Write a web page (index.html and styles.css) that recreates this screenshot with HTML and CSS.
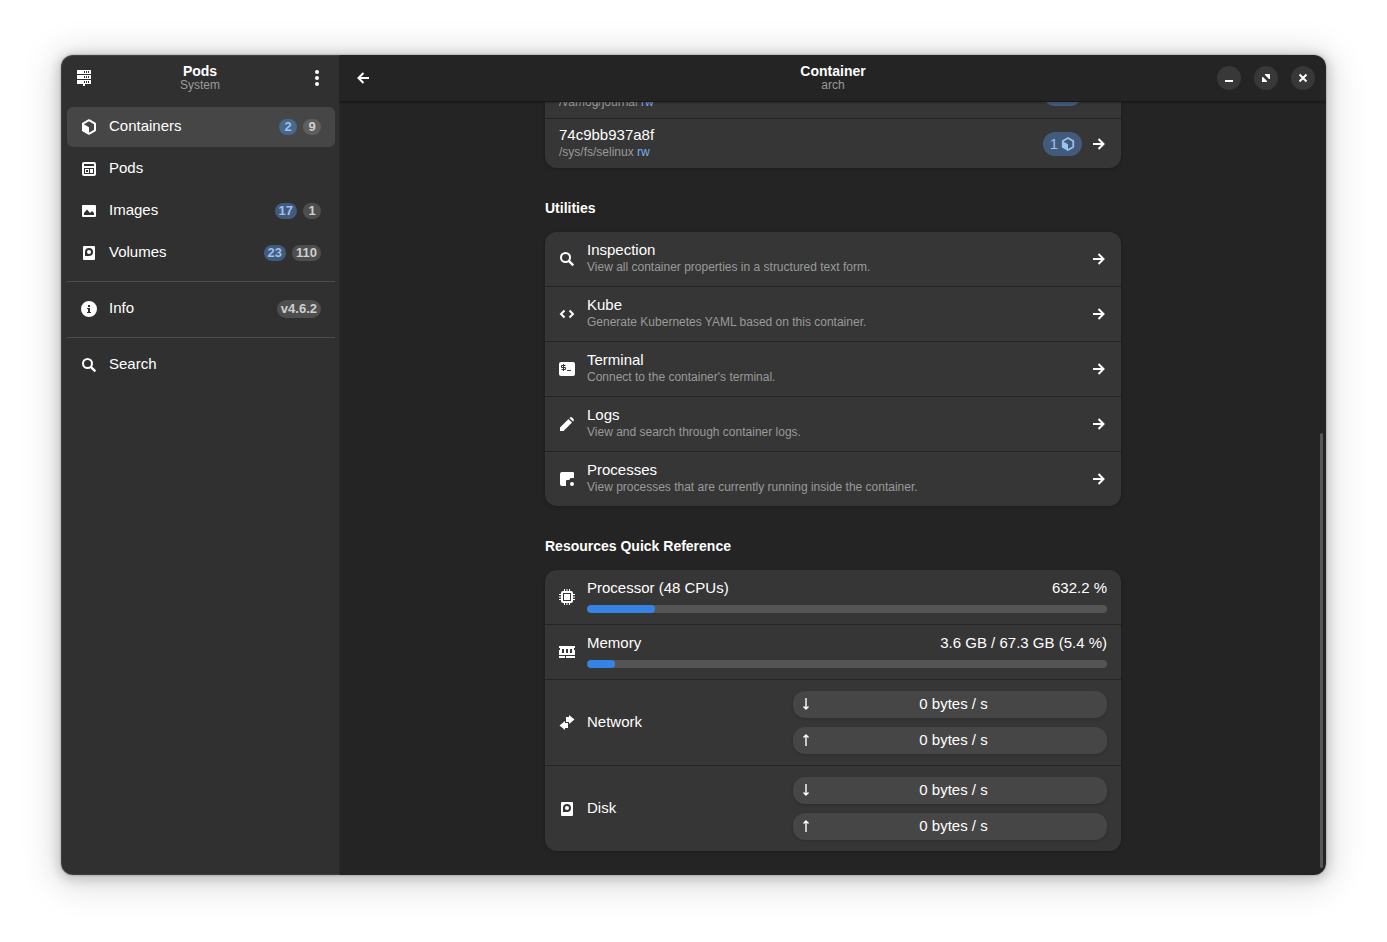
FILE: index.html
```html
<!DOCTYPE html>
<html lang="en">

<head>
    <meta charset="UTF-8">
    <meta name="viewport" content="width=device-width, initial-scale=1.0">
    <title>Pods</title>

    <link rel="stylesheet" href="styles.css">
</head>

<body>
    <!-- shared icons -->
    <svg class="icon-defs" aria-hidden="true">
        <symbol id="cube" viewBox="0 0 16 16">
            <path d="M8 1.2 14 4.6v6.8L8 14.8 2 11.4V4.6z" fill="none" stroke="currentColor" stroke-width="2" stroke-linejoin="round"/>
            <path d="M1.5 4.6 8 8.2v7L2 12z" fill="currentColor"/>
        </symbol>
        <symbol id="disk" viewBox="0 0 16 16">
            <path fill="currentColor" fill-rule="evenodd" d="M3 1h10a1 1 0 0 1 1 1v12a1 1 0 0 1-1 1H3a1 1 0 0 1-1-1V2a1 1 0 0 1 1-1zM8 3a4 4 0 0 0-4 4v4h4a4 4 0 0 0 0-8z"/>
            <circle cx="8" cy="7" r="2" fill="currentColor"/>
        </symbol>
        <symbol id="search" viewBox="0 0 16 16">
            <circle cx="6.5" cy="6.5" r="4.5" fill="none" stroke="currentColor" stroke-width="2"/>
            <path d="m9.8 9.8 4.5 4.5" stroke="currentColor" stroke-width="2.4"/>
        </symbol>
        <symbol id="go-next" viewBox="0 0 16 16">
            <path d="M2 8h10M7.500 3l5 5-5 5" fill="none" stroke="currentColor" stroke-width="2"/>
        </symbol>
        <symbol id="down" viewBox="0 0 8 16">
            <path d="M4 1v11M1.5 9.500 4 12l2.500-2.500" fill="none" stroke="currentColor" stroke-width="1.4"/>
        </symbol>
        <symbol id="up" viewBox="0 0 8 16">
            <path d="M4 13V2M1.5 4.500 4 2l2.500 2.500" fill="none" stroke="currentColor" stroke-width="1.4"/>
        </symbol>
    </svg>

    <div class="window">
        <aside class="sidebar">
            <header class="headerbar">
                <button class="flat-btn" aria-label="Connections">
                    <svg class="icon" viewBox="0 0 16 16">
                        <path fill="currentColor" fill-rule="evenodd" d="M1 0h14v4H1zM8 1v2h1V1zM10 1v2h1V1zM12 1v2h1V1zM1 5h14v4H1zM8 6v2h1V6zM10 6v2h1V6zM12 6v2h1V6zM1 10h14v4H9v2H7v-2H1zM8 11v2h1v-2zM10 11v2h1v-2zM12 11v2h1v-2z"/>
                    </svg>
                </button>
                <div class="titles">
                    <h1>Pods</h1>
                    <p>System</p>
                </div>
                <button class="flat-btn end" aria-label="Main menu">
                    <svg class="icon" viewBox="0 0 16 16" fill="currentColor">
                        <circle cx="8" cy="2" r="2"/><circle cx="8" cy="8" r="2"/><circle cx="8" cy="14" r="2"/>
                    </svg>
                </button>
            </header>

            <nav class="nav">
                <a href="#" class="nav-item active">
                    <svg class="icon"><use href="#cube"/></svg>
                    <span class="nav-label">Containers</span>
                    <span class="badge blue">2</span>
                    <span class="badge">9</span>
                </a>
                <a href="#" class="nav-item">
                    <svg class="icon" viewBox="0 0 16 16">
                        <path fill="currentColor" fill-rule="evenodd" d="M3 1h10a2 2 0 0 1 2 2v10a2 2 0 0 1-2 2H3a2 2 0 0 1-2-2V3a2 2 0 0 1 2-2zM3 3v2h10V3zM3 7v6h10V7zM4 8h4v4H4zM9 8h3v1H9zM9 9h3v3H9zM5 11h2v-2H5z"/>
                    </svg>
                    <span class="nav-label">Pods</span>
                </a>
                <a href="#" class="nav-item">
                    <svg class="icon" viewBox="0 0 16 16">
                        <path fill="currentColor" fill-rule="evenodd" d="M2 2h12a1 1 0 0 1 1 1v10a1 1 0 0 1-1 1H2a1 1 0 0 1-1-1V3a1 1 0 0 1 1-1zM3 12h10v-2l-2-2-2 2-3-3.500-3 3.500z"/>
                    </svg>
                    <span class="nav-label">Images</span>
                    <span class="badge blue">17</span>
                    <span class="badge">1</span>
                </a>
                <a href="#" class="nav-item">
                    <svg class="icon"><use href="#disk"/></svg>
                    <span class="nav-label">Volumes</span>
                    <span class="badge blue">23</span>
                    <span class="badge">110</span>
                </a>
                <hr>
                <a href="#" class="nav-item">
                    <svg class="icon" viewBox="0 0 16 16">
                        <path fill="currentColor" fill-rule="evenodd" d="M8 0a8 8 0 1 1 0 16A8 8 0 0 1 8 0zM7 4v2h2V4zM6 7v1h1v3H6v1h4v-1H9V7z"/>
                    </svg>
                    <span class="nav-label">Info</span>
                    <span class="badge version">v4.6.2</span>
                </a>
                <hr>
                <a href="#" class="nav-item">
                    <svg class="icon"><use href="#search"/></svg>
                    <span class="nav-label">Search</span>
                </a>
            </nav>
        </aside>

        <main class="content">
            <header class="headerbar">
                <button class="flat-btn" aria-label="Back">
                    <svg class="icon" viewBox="0 0 16 16">
                        <path d="M14 8H4M8.500 3l-5 5 5 5" fill="none" stroke="currentColor" stroke-width="2"/>
                    </svg>
                </button>
                <div class="titles">
                    <h1>Container</h1>
                    <p>arch</p>
                </div>
                <div class="window-controls end">
                    <button class="round-btn" aria-label="Minimize">
                        <svg class="icon" viewBox="0 0 16 16"><path d="M4 10h8v2H4z" fill="currentColor"/></svg>
                    </button>
                    <button class="round-btn" aria-label="Maximize">
                        <svg class="icon" viewBox="0 0 16 16"><path d="M7 4h5v5h-1L9.500 7.500 8.500 6.500 7 5zM4 7h1l1.500 1.500 1 1L9 11v1H4z" fill="currentColor"/></svg>
                    </button>
                    <button class="round-btn" aria-label="Close">
                        <svg class="icon" viewBox="0 0 16 16"><path d="m4.500 4.500 7 7m0-7-7 7" stroke="currentColor" stroke-width="2"/></svg>
                    </button>
                </div>
            </header>

            <div class="scroller">
                <div class="page">
                    <section>
                        <div class="card">
                            <a href="#" class="row mount untitled">
                                <span class="row-text">
                                    <span class="row-sub">/var/log/journal <span class="mode">rw</span></span>
                                </span>
                                <span class="usage"></span>
                                <svg class="icon"><use href="#go-next"/></svg>
                            </a>
                            <a href="#" class="row mount">
                                <span class="row-text">
                                    <span class="row-title">74c9bb937a8f</span>
                                    <span class="row-sub">/sys/fs/selinux <span class="mode">rw</span></span>
                                </span>
                                <span class="usage">1 <svg class="icon"><use href="#cube"/></svg></span>
                                <svg class="icon"><use href="#go-next"/></svg>
                            </a>
                        </div>
                    </section>

                    <section>
                        <h2>Utilities</h2>
                        <div class="card">
                            <a href="#" class="row">
                                <svg class="icon"><use href="#search"/></svg>
                                <span class="row-text">
                                    <span class="row-title">Inspection</span>
                                    <span class="row-sub">View all container properties in a structured text form.</span>
                                </span>
                                <svg class="icon"><use href="#go-next"/></svg>
                            </a>
                            <a href="#" class="row">
                                <svg class="icon" viewBox="0 0 16 16">
                                    <path d="M5.500 4.500 2 8l3.500 3.500M10.500 4.500 14 8l-3.500 3.500" fill="none" stroke="currentColor" stroke-width="2"/>
                                </svg>
                                <span class="row-text">
                                    <span class="row-title">Kube</span>
                                    <span class="row-sub">Generate Kubernetes YAML based on this container.</span>
                                </span>
                                <svg class="icon"><use href="#go-next"/></svg>
                            </a>
                            <a href="#" class="row">
                                <svg class="icon" viewBox="0 0 16 16">
                                    <rect y="1" width="16" height="14" rx="2" fill="currentColor"/>
                                    <path d="M6.500 4.500h-4v2h4v2h-4M4.500 3v7M8 9.500h4" fill="none" stroke="#363636"/>
                                </svg>
                                <span class="row-text">
                                    <span class="row-title">Terminal</span>
                                    <span class="row-sub">Connect to the container's terminal.</span>
                                </span>
                                <svg class="icon"><use href="#go-next"/></svg>
                            </a>
                            <a href="#" class="row">
                                <svg class="icon" viewBox="0 0 16 16" fill="currentColor">
                                    <path d="M9.500 3 13 6.500 4.500 15H1v-3.500zM10.500 2l.5-.5a1.500 1.500 0 0 1 2 0L14.500 3a1.500 1.500 0 0 1 0 2l-.5.5z"/>
                                </svg>
                                <span class="row-text">
                                    <span class="row-title">Logs</span>
                                    <span class="row-sub">View and search through container logs.</span>
                                </span>
                                <svg class="icon"><use href="#go-next"/></svg>
                            </a>
                            <a href="#" class="row">
                                <svg class="icon" viewBox="0 0 16 16" fill="currentColor">
                                    <path d="M3 1h11a1 1 0 0 1 1 1v5h-3a1 1 0 0 0-1 1l-1 1H8a1 1 0 0 0-1 1v5H3a2 2 0 0 1-2-2V3a2 2 0 0 1 2-2z"/>
                                    <circle cx="13" cy="13" r="2"/>
                                </svg>
                                <span class="row-text">
                                    <span class="row-title">Processes</span>
                                    <span class="row-sub">View processes that are currently running inside the container.</span>
                                </span>
                                <svg class="icon"><use href="#go-next"/></svg>
                            </a>
                        </div>
                    </section>

                    <section>
                        <h2>Resources Quick Reference</h2>
                        <div class="card">
                            <div class="row">
                                <svg class="icon" viewBox="0 0 16 16">
                                    <path fill="currentColor" fill-rule="evenodd" d="M4 2h8a2 2 0 0 1 2 2v8a2 2 0 0 1-2 2H4a2 2 0 0 1-2-2V4a2 2 0 0 1 2-2zM4 4v8h8V4zM5 5h6v6H5z"/>
                                    <path d="M5.500 0v2M8 0v2M10.500 0v2M5.500 14v2M8 14v2M10.500 14v2M0 5.500h2M0 8h2M0 10.500h2M14 5.500h2M14 8h2M14 10.500h2" stroke="currentColor"/>
                                </svg>
                                <div class="meter">
                                    <label for="cpu">Processor (48 CPUs)</label>
                                    <span>632.2 %</span>
                                    <progress id="cpu" max="4800" value="632.2"></progress>
                                </div>
                            </div>
                            <div class="row">
                                <svg class="icon" viewBox="0 0 16 16">
                                    <path fill="currentColor" fill-rule="evenodd" d="M0 2h16v2h-1v2h1v5H0V6h1V4H0zM3 5v4h2V5zM7 5v4h2V5zM11 5v4h2V5zM0 12h6v2H0zM7 12h9v2H7z"/>
                                </svg>
                                <div class="meter">
                                    <label for="memory">Memory</label>
                                    <span>3.6 GB / 67.3 GB (5.4 %)</span>
                                    <progress id="memory" max="100" value="5.4"></progress>
                                </div>
                            </div>
                            <div class="row io">
                                <svg class="icon" viewBox="0 0 16 16" fill="currentColor">
                                    <path d="M10 0l5.500 4.500L10 9V7H7V2h3zM6 6v2h3v5H6v2L.5 10.500z"/>
                                </svg>
                                <span class="io-label">Network</span>
                                <div class="rates">
                                    <div class="rate"><svg class="arrow"><use href="#down"/></svg><span>0 bytes / s</span></div>
                                    <div class="rate"><svg class="arrow"><use href="#up"/></svg><span>0 bytes / s</span></div>
                                </div>
                            </div>
                            <div class="row io">
                                <svg class="icon"><use href="#disk"/></svg>
                                <span class="io-label">Disk</span>
                                <div class="rates">
                                    <div class="rate"><svg class="arrow"><use href="#down"/></svg><span>0 bytes / s</span></div>
                                    <div class="rate"><svg class="arrow"><use href="#up"/></svg><span>0 bytes / s</span></div>
                                </div>
                            </div>
                        </div>
                    </section>
                </div>
            </div>
            <div class="scroll-thumb"></div>
        </main>
    </div>
</body>

</html>
```
FILE: styles.css
```css
* {
    box-sizing: border-box;
    margin: 0;
    padding: 0;
}

body {
    height: 100vh;
    padding: 55px 61px 67px;
    background-color: white;
    color: white;
    font-family: "Liberation Sans", Arial, Helvetica, sans-serif;
    font-size: 15px;
    line-height: 18px;
}

a {
    color: inherit;
    text-decoration: none;
}

button {
    border: none;
    background: none;
    color: inherit;
    cursor: pointer;
}

.icon-defs {
    display: none;
}

.icon {
    display: block;
    flex: none;
    width: 16px;
    height: 16px;
}

.window {
    display: flex;
    height: 100%;
    overflow: hidden;
    border-radius: 12px;
    outline: 1px solid rgba(255, 255, 255, .08);
    outline-offset: -1px;
    box-shadow: 0 0 2px rgba(0, 0, 0, .4), 0 2px 12px 3px rgba(0, 0, 0, .16), 0 4px 36px 6px rgba(0, 0, 0, .14);
}

/* header bars */
.headerbar {
    display: grid;
    grid-template-columns: 1fr auto 1fr;
    align-items: center;
    height: 46px;
    padding: 0 11px;
}

.titles {
    padding-bottom: 2px;
    text-align: center;
}

.titles h1,
h2 {
    font-size: 14px;
    font-weight: bold;
}

.titles h1 {
    line-height: 16px;
}

.titles p {
    color: #9a9a9a;
    font-size: 12px;
    line-height: 13px;
}

.flat-btn {
    justify-self: start;
    margin: 0 3px 0 4px;
}

.end {
    justify-self: end;
}

.window-controls {
    display: flex;
    gap: 13px;
}

.round-btn {
    display: flex;
    align-items: center;
    justify-content: center;
    width: 24px;
    height: 24px;
    border-radius: 50%;
    background-color: #383838;
}

/* sidebar */
.sidebar {
    flex: none;
    width: 279px;
    background-color: #303030;
    border-right: 1px solid #282828;
}

.nav {
    display: flex;
    flex-direction: column;
    gap: 2px;
    padding: 6px 4px 6px 6px;
}

.nav-item {
    display: flex;
    align-items: center;
    gap: 6px;
    height: 40px;
    padding: 0 14px;
    border-radius: 6px;
}

.nav-item.active {
    background-color: #464646;
}

.nav-label {
    flex: 1;
    padding: 0 0 2px 6px;
}

.nav hr {
    margin: 6px 0 5px;
    border: none;
    border-top: 1px solid #4d4d4d;
}

.badge {
    min-width: 18px;
    padding: 0 4px;
    border-radius: 9px;
    background-color: #4e4e4e;
    color: #cfcfcf;
    font-size: 13px;
    font-weight: bold;
    line-height: 16px;
    text-align: center;
}

.active .badge {
    background-color: #5e5e5e;
}

.badge.version {
    line-height: 18px;
}

.badge.blue,
.usage {
    background-color: #435b7b;
    color: #99c1f1;
}

.active .badge.blue {
    background-color: #4a678c;
}

/* content */
.content {
    position: relative;
    display: flex;
    flex: 1;
    flex-direction: column;
    min-width: 0;
    background-color: #242424;
}

.content .headerbar {
    flex: none;
    height: 47px;
    border-bottom: 1px solid #191919;
    box-shadow: 0 1px 2px rgba(0, 0, 0, .25);
    z-index: 1;
}

/* reversed column keeps the view at the end of the page */
.scroller {
    display: flex;
    flex: 1;
    flex-direction: column-reverse;
    min-height: 0;
    overflow-y: auto;
    scrollbar-width: none;
}

.page {
    width: 100%;
    max-width: 600px;
    margin: 0 auto;
    padding: 24px 12px;
}

.scroll-thumb {
    position: absolute;
    right: 3px;
    bottom: 7px;
    width: 3px;
    height: 53%;
    border-radius: 2px;
    background-color: #565656;
}

h2 {
    padding: 30px 0 14px;
    line-height: 20px;
}

.card {
    border-radius: 12px;
    background-color: #363636;
    box-shadow: 0 1px 3px 1px rgba(0, 0, 0, .15);
}

.row {
    display: flex;
    align-items: center;
    gap: 12px;
    height: 54px;
    padding: 0 14px;
}

.row + .row {
    height: 55px;
    border-top: 1px solid #242424;
}

.row-text {
    flex: 1;
    min-width: 0;
    padding-bottom: 2px;
}

.row-title,
.row-sub {
    display: block;
}

.row-sub {
    color: #9a9a9a;
    font-size: 12px;
    line-height: 16px;
}

.mode {
    color: #78aeed;
}

.row.mount {
    gap: 9px;
    height: 49px;
}

.row.mount + .mount {
    height: 50px;
}

.untitled .row-text {
    align-self: flex-end;
    padding-bottom: 8px;
}

.usage {
    display: flex;
    align-items: center;
    gap: 3px;
    min-width: 39px;
    height: 24px;
    padding: 0 7px;
    border-radius: 12px;
}

.usage .icon {
    width: 14px;
    height: 14px;
}

.meter {
    display: grid;
    flex: 1;
    grid-template-columns: 1fr auto;
    row-gap: 8px;
    padding-bottom: 2px;
}

.meter progress {
    grid-column: 1 / 3;
    width: 100%;
    height: 8px;
    border: none;
    border-radius: 4px;
    overflow: hidden;
    appearance: none;
}

.meter progress::-webkit-progress-bar {
    background-color: #555555;
}

.meter progress::-webkit-progress-value {
    border-radius: 4px;
    background-color: #3584e4;
}

.row.io {
    height: auto;
    padding: 11px 14px;
}

.io-label {
    flex: 1;
    padding-bottom: 2px;
}

.rates {
    display: flex;
    flex: 0 1 314px;
    flex-direction: column;
    gap: 9px;
}

.rate {
    display: flex;
    align-items: center;
    height: 27px;
    padding: 0 10px 0 9px;
    border-radius: 12px;
    background-color: #464646;
    box-shadow: 0 1px 3px rgba(0, 0, 0, .2);
}

.rate span {
    flex: 1;
    padding-bottom: 2px;
    text-align: center;
}

.arrow {
    width: 8px;
    height: 16px;
}
```
